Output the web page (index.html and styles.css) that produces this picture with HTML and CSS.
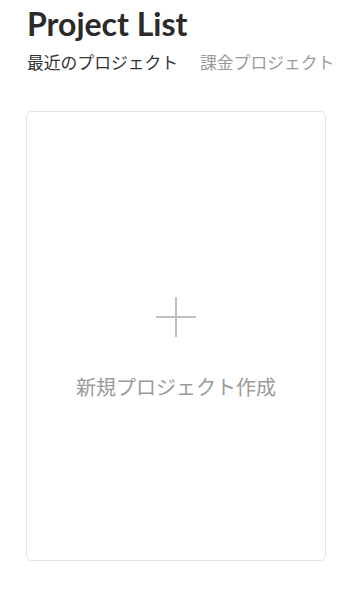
FILE: index.html
```html
<!DOCTYPE html>
<html lang="ja">
<head>
<meta charset="utf-8">
<link rel="stylesheet" href="styles.css">
</head>
<body>
<div class="page">
  <h1 class="title">Project List</h1>
  <nav class="tabs">
    <span class="tab active">最近のプロジェクト</span>
    <span class="tab">課金プロジェクト</span>
  </nav>
  <div class="card">
    <div class="plus"></div>
    <div class="new-label">新規プロジェクト作成</div>
  </div>
</div>
</body>
</html>
```

FILE: styles.css
```css
html, body {
  margin: 0;
  padding: 0;
  background: #fff;
}
.page {
  padding: 5px 0 0 27px;
  font-family: Lato, "Noto Sans CJK JP", sans-serif;
}
.title {
  margin: 0;
  font-family: Lato, sans-serif;
  font-weight: 700;
  font-size: 32px;
  line-height: 38px;
  color: #2a2a2a;
}
.tabs {
  display: flex;
  gap: 22px;
  margin-top: 6px;
  height: 26px;
  align-items: center;
}
.tab {
  font-family: "Noto Sans CJK JP", sans-serif;
  font-size: 16.8px;
  color: #9a9a9a;
  white-space: nowrap;
}
.tab.active {
  color: #333;
}
.card {
  box-sizing: border-box;
  margin: 36px 0 0 -1px;
  width: 300px;
  height: 450px;
  padding-top: 6px;
  border: 1px solid #e2e2e2;
  border-radius: 6px;
  box-shadow: 0 0 2px rgba(0,0,0,0.04);
  display: flex;
  flex-direction: column;
  align-items: center;
  justify-content: center;
}
.plus {
  position: relative;
  width: 40px;
  height: 40px;
  margin-top: 20px;
}
.plus::before, .plus::after {
  content: "";
  position: absolute;
  background: #c0c0c0;
}
.plus::before {
  left: 0; right: 0; top: 19px; height: 2px;
}
.plus::after {
  top: 0; bottom: 0; left: 19px; width: 2px;
}
.new-label {
  margin-top: 36px;
  font-family: "Noto Sans CJK JP", sans-serif;
  font-size: 20px;
  line-height: 28px;
  color: #9a9a9a;
}
```
